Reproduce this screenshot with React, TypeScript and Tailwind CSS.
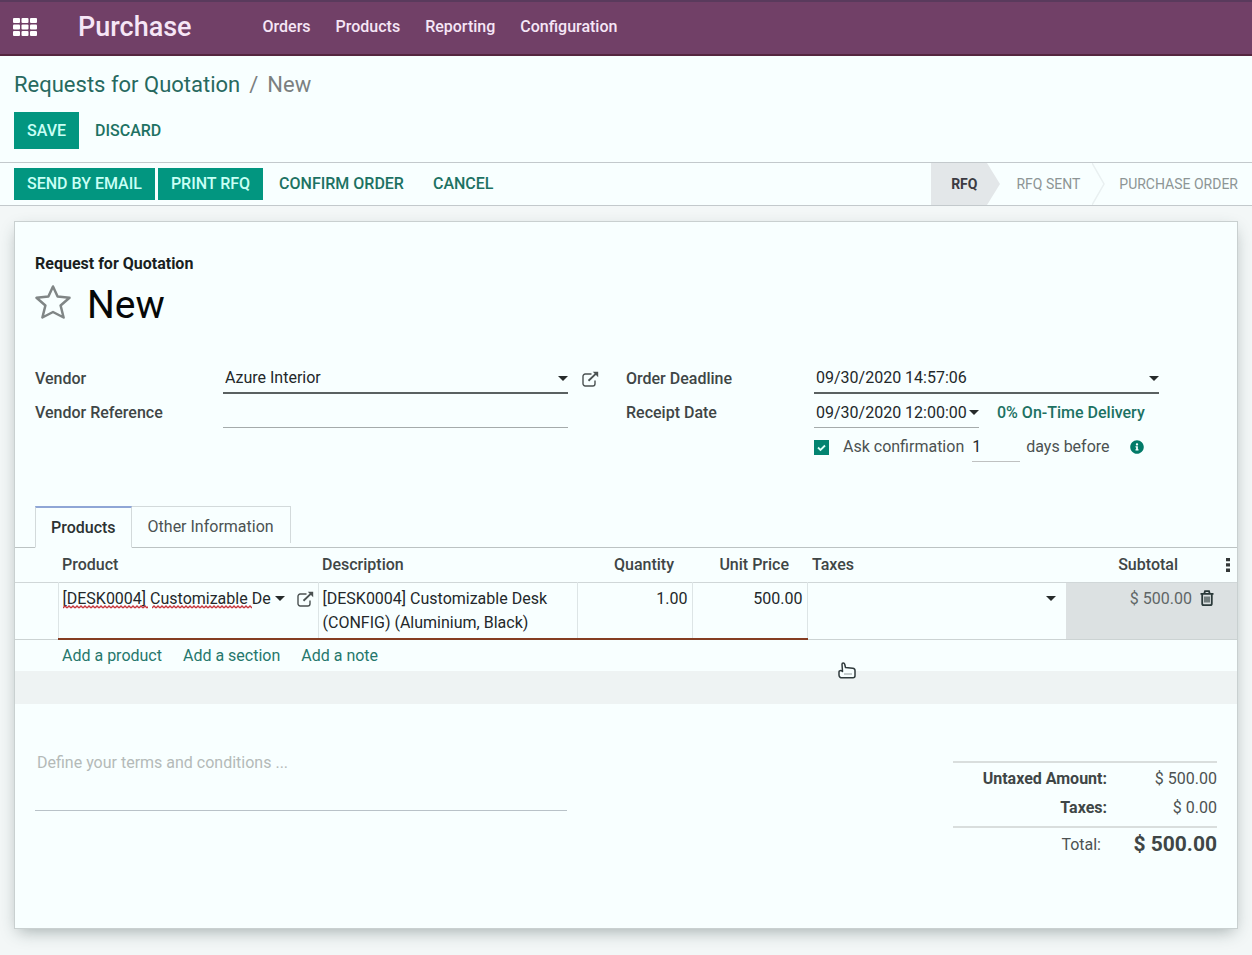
import React from "react";
import { FaInfoCircle } from "react-icons/fa";

const menus = ["Orders", "Products", "Reporting", "Configuration"];

function AppsGrid() {
  return (
    <svg viewBox="0 0 24 18" className="h-[18px] w-6" fill="currentColor">
      {[0, 8.5, 17].map((x) =>
        [0, 6.5, 13].map((y) => <rect key={x + "-" + y} x={x} y={y} width="7" height="5" rx="1" />)
      )}
    </svg>
  );
}

function Caret({ label }: { label: string }) {
  return (
    <button type="button" aria-label={label} className="flex h-4 w-2.5 shrink-0 items-center justify-center">
      <svg viewBox="0 0 10 5" className="h-[5px] w-2.5 text-[#262b2b]" fill="currentColor">
        <path d="M0 0h10L5 5z" />
      </svg>
    </button>
  );
}

function ExternalLink({ label }: { label: string }) {
  return (
    <button type="button" aria-label={label} className="flex shrink-0 text-[#4b5252]">
      <svg viewBox="0 0 17 16" className="h-4 w-[17px]" fill="none" stroke="currentColor" strokeWidth="1.4">
        <path d="M9.5 3H3.2A2.2 2.2 0 0 0 1 5.2v7.6A2.2 2.2 0 0 0 3.2 15h7.6a2.2 2.2 0 0 0 2.2-2.2V9.5" />
        <path d="M6.5 9.700 14 2.600" strokeWidth="1.9" />
        <path d="M10.800.800h5.400v5.400z" fill="currentColor" stroke="none" />
      </svg>
    </button>
  );
}

function Trash() {
  return (
    <svg viewBox="0 0 14 16" className="h-4 w-3.5" fill="none" stroke="currentColor" strokeWidth="1.8">
      <path d="M0.500 3.800h13M4.300 3.500 5 1.200h4l.7 2.300M2.200 4v9.400c0 1 .6 1.700 1.500 1.700h6.600c.9 0 1.500-.7 1.500-1.700V4" />
      <path d="M5 6.500v6M7 6.500v6M9 6.500v6" strokeWidth="1.200" />
    </svg>
  );
}

function Squiggle({ className }: { className: string }) {
  return (
    <svg aria-hidden="true" className={className} height="4">
      <defs>
        <pattern id="squiggle" width="4" height="4" patternUnits="userSpaceOnUse">
          <path d="M0 3 2 1l2 2" fill="none" stroke="#c8363c" strokeWidth="1.3" />
        </pattern>
      </defs>
      <rect width="100%" height="4" fill="url(#squiggle)" />
    </svg>
  );
}

function Chevron({ filled }: { filled?: boolean }) {
  return (
    <svg viewBox="0 0 13 42" preserveAspectRatio="none" className="h-full w-[13px] shrink-0">
      {filled ? (
        <path d="M0 0 13 21 0 42z" fill="#e3e7e9" />
      ) : (
        <path d="M0 0 12 21 0 42" fill="none" stroke="#e9f0f1" strokeWidth="1.5" />
      )}
    </svg>
  );
}

const label = "pt-[3px] text-base font-medium text-[#3f4646]";
const field = "w-full min-w-0 bg-transparent text-base text-[#23282a] outline-none";
const solid = "bg-[#029680] px-[13px] font-medium text-[#c9fff5]";
const plain = "px-[13px] font-medium text-[#1d7263]";
const editable = "border-b-2 border-l border-b-[#853d22] border-l-[#dde5e6]";

export default function App() {
  return (
    <div className="flex min-h-screen flex-col bg-[#f3f7f7] font-['Roboto',sans-serif] text-base text-[#4c5252]">
      <header className="flex h-14 items-center border-t-2 border-b-2 border-t-[#593a5c] border-b-[#55263f] bg-[#714067] pb-[3px] pl-[13px] text-[#f6e6f6]">
        <button type="button" aria-label="Apps" className="text-white">
          <AppsGrid />
        </button>
        <a href="#purchase" className="ml-[41px] text-[27px] font-medium leading-8">Purchase</a>
        <nav className="ml-[71px] flex gap-[25px] font-medium">
          {menus.map((m) => (
            <a key={m} href={"#" + m.toLowerCase()}>{m}</a>
          ))}
        </nav>
      </header>

      <div className="flex h-[106px] flex-col bg-[#f8ffff] px-3.5 pt-3.5">
        <nav aria-label="Breadcrumb" className="flex gap-[9px] text-[22px] leading-[30px] text-[#7b8080]">
          <a href="#rfq" className="text-[#27695f]">Requests for Quotation</a>
          <span>/</span>
          <span>New</span>
        </nav>
        <div className="mt-3 flex">
          <button type="button" className={"h-[37px] " + solid}>SAVE</button>
          <button type="button" className={"ml-[3px] " + plain}>DISCARD</button>
        </div>
      </div>

      <div className="flex h-11 items-stretch justify-between border-y border-[#c3c9cc] bg-[#f8ffff] px-3.5">
        <div className="flex items-center gap-[3px]">
          <button type="button" className={"h-8 " + solid}>SEND BY EMAIL</button>
          <button type="button" className={"h-8 " + solid}>PRINT RFQ</button>
          <button type="button" className={plain}>CONFIRM ORDER</button>
          <button type="button" className={plain}>CANCEL</button>
        </div>
        <ol className="flex items-stretch text-sm text-[#8d9595]">
          <li className="flex">
            <span className="flex items-center bg-[#e3e7e9] pl-5 pr-2.5 font-bold text-[#3b3b42]">RFQ</span>
            <Chevron filled />
          </li>
          <li className="flex">
            <span className="flex items-center pl-4 pr-3">RFQ SENT</span>
            <Chevron />
          </li>
          <li className="flex items-center pl-3.5">PURCHASE ORDER</li>
        </ol>
      </div>

      <main className="px-3.5 pt-[15px] pb-[26px]">
        <section className="border border-[#c9d0d0] bg-[#f8ffff] pb-[68px] shadow-[0_6px_16px_-4px_rgba(40,60,60,0.4)]">
          <div className="px-5 pt-[30px]">
            <p className="text-base font-bold leading-6 text-[#1a1f1f]">Request for Quotation</p>
            <div className="mt-2 flex h-[42px] items-start">
              <button type="button" aria-label="Priority" className="text-[#808686]">
                <svg viewBox="0 0 36 36" className="h-9 w-9" fill="none" stroke="currentColor" strokeWidth="2.5" strokeLinejoin="round">
                  <path d="M18 2.500 22.600 12.600 34.500 13.800 25.600 21.500 28.600 33.500 18 28 7.400 33.500 10.400 21.500 1.500 13.800 13.400 12.600z" />
                </svg>
              </button>
              <h1 className="ml-4 text-[39px] leading-[42px] text-[#060808]">New</h1>
            </div>

            <div className="mt-[34px] grid grid-cols-2">
              <div className="grid auto-rows-[34px] grid-cols-[188px_1fr_58px] content-start items-center">
                <label htmlFor="vendor" className={label}>Vendor</label>
                <div className="flex h-full items-center border-b-2 border-[#5a6161] pt-1">
                  <input id="vendor" defaultValue="Azure Interior" className={field + " pl-0.5"} />
                  <Caret label="Open vendors" />
                </div>
                <div className="pl-3.5 pt-1"><ExternalLink label="Open vendor" /></div>
                <label htmlFor="ref" className={label}>Vendor Reference</label>
                <div className="flex h-full items-center border-b border-[#a5abab] pt-1">
                  <input id="ref" className={field} />
                </div>
              </div>

              <div className="grid auto-rows-[34px] grid-cols-[188px_1fr_58px] items-center">
                <label htmlFor="deadline" className={label}>Order Deadline</label>
                <div className="flex h-full items-center border-b-2 border-[#5a6161] pt-1">
                  <input id="deadline" defaultValue="09/30/2020 14:57:06" className={field + " pl-0.5"} />
                  <Caret label="Pick deadline" />
                </div>
                <span />
                <label htmlFor="receipt" className={label}>Receipt Date</label>
                <div className="flex h-full items-center">
                  <div className="flex h-full w-[165px] items-center border-b border-[#a5abab] pt-1">
                    <input id="receipt" defaultValue="09/30/2020 12:00:00" className={field + " pl-0.5"} />
                    <Caret label="Pick receipt date" />
                  </div>
                  <a href="#delivery" className="ml-[18px] whitespace-nowrap pt-1 font-medium text-[#1d7263]">0% On-Time Delivery</a>
                </div>
                <span />
                <div className="col-span-2 col-start-2 flex h-full items-center whitespace-nowrap">
                  <span className="relative mt-1 flex h-[15px] w-[15px]">
                    <input id="ask" type="checkbox" defaultChecked className="h-[15px] w-[15px] appearance-none bg-[#038471]" />
                    <svg aria-hidden="true" viewBox="0 0 15 15" className="pointer-events-none absolute inset-0" fill="none" stroke="#d9fff8" strokeWidth="1.8">
                      <path d="m4 7.500 2.500 2.500L11 5.500" />
                    </svg>
                  </span>
                  <label htmlFor="ask" className="ml-3.5 pt-1">Ask confirmation</label>
                  <div className="ml-2 flex h-full w-12 items-center border-b border-[#bfc1c1] pt-1">
                    <input aria-label="Days" defaultValue="1" className={field} />
                  </div>
                  <span className="ml-1.5 pt-1">days before</span>
                  <FaInfoCircle className="ml-5 mt-1 h-3.5 w-3.5 text-[#027a68]" />
                </div>
              </div>
            </div>
          </div>

          <div role="tablist" className="mt-11 flex h-[42px] border-b border-[#bcc3c3] pl-5">
            <button type="button" role="tab" aria-selected="true" className="-mb-px border border-t-2 border-[#d3dadb] border-t-[#8fa6d6] border-b-[#f8ffff] bg-[#f8ffff] px-[15px] font-medium text-[#2c3232]">Products</button>
            <button type="button" role="tab" aria-selected="false" className="mb-1 border border-b-0 border-l-0 border-[#d3dadb] px-4 pt-1">Other Information</button>
          </div>

          <table className="w-full table-fixed border-collapse text-[#23282a]">
            <colgroup>
              <col className="w-[43px]" />
              <col className="w-[260px]" />
              <col />
              <col className="w-[115px]" />
              <col className="w-[115px]" />
              <col className="w-[259px]" />
              <col className="w-[130px]" />
              <col className="w-[41px]" />
            </colgroup>
            <thead>
              <tr className="h-[34px] border-b border-[#d0d7d8] text-left text-[#3f4646] [&>th]:p-0 [&>th]:font-medium">
                <th />
                <th><span className="pl-1">Product</span></th>
                <th><span className="pl-1">Description</span></th>
                <th><span className="block pr-[18px] text-right">Quantity</span></th>
                <th><span className="block pr-[18px] text-right">Unit Price</span></th>
                <th><span className="pl-[5px]">Taxes</span></th>
                <th><span className="block pr-[18px] text-right">Subtotal</span></th>
                <th>
                  <button type="button" aria-label="Optional columns" className="ml-auto mr-[7px] flex">
                    <svg viewBox="0 0 4 14" className="h-3.5 w-1" fill="#333838">
                      <path d="M0 0h4v3.300H0zM0 5.300h4v3.300H0zM0 10.600h4v3.300H0z" />
                    </svg>
                  </button>
                </th>
              </tr>
            </thead>
            <tbody>
              <tr className="h-[57px] border-b border-[#ccd3d3] align-top [&>td]:p-0">
                <td />
                <td className={editable}>
                  <div className="flex items-center pl-1 pt-1">
                    <div className="relative flex min-w-0 flex-1">
                      <input aria-label="Product" spellCheck={false} defaultValue="[DESK0004] Customizable De" className={field} />
                      <Squiggle className="absolute bottom-0.5 left-0 w-[85px]" />
                      <Squiggle className="absolute bottom-0.5 left-[89px] w-[100px]" />
                    </div>
                    <Caret label="Open products" />
                    <div className="ml-3 mr-1"><ExternalLink label="Open product" /></div>
                  </div>
                </td>
                <td className={editable}>
                  <textarea aria-label="Description" rows={2} defaultValue={"[DESK0004] Customizable Desk\n(CONFIG) (Aluminium, Black)"} className={field + " block resize-none overflow-hidden pl-1 pt-1 leading-6"} />
                </td>
                <td className={editable}>
                  <input aria-label="Quantity" defaultValue="1.00" className={field + " pr-1 pt-1 text-right"} />
                </td>
                <td className={editable + " border-r border-r-[#dde5e6]"}>
                  <input aria-label="Unit price" defaultValue="500.00" className={field + " pr-1 pt-1 text-right"} />
                </td>
                <td>
                  <div className="flex items-center pr-2.5 pt-1">
                    <input aria-label="Taxes" className={field} />
                    <Caret label="Open taxes" />
                  </div>
                </td>
                <td className="bg-[#dce1e2]">
                  <span className="block pr-1 pt-1 text-right text-[#5f6666]">$ 500.00</span>
                </td>
                <td className="bg-[#dce1e2]">
                  <button type="button" aria-label="Delete row" className="ml-1 mt-[7px] block text-[#2b3a3a]"><Trash /></button>
                </td>
              </tr>
              <tr className="h-8 [&>td]:p-0">
                <td />
                <td colSpan={7}>
                  <div className="relative flex gap-[21px] pl-1 text-[#25776c]">
                    <a href="#product">Add a product</a>
                    <a href="#section">Add a section</a>
                    <a href="#note">Add a note</a>
                    <svg aria-hidden="true" viewBox="0 0 18 17" className="absolute left-[780px] top-[18px] h-[17px] w-[18px]" fill="#f8ffff" stroke="#2f3a3c" strokeWidth="1.5" strokeLinejoin="round">
                      <path d="M4.500 9.500 4 2.300C4 .8 6.300.600 6.700 2.200L7.500 5.500l7.300.8c1.400.2 2.200 1 2.200 2.300v5.200c0 1.200-.8 2-2 2H4.200c-2 0-3.200-1-3.200-2.800V9.800c0-1.300 1.800-1.700 3.500-.3z" />
                      <path d="M6.500 12h8" strokeDasharray="1 1" strokeWidth="1" />
                    </svg>
                  </div>
                </td>
              </tr>
              <tr className="h-[33px] bg-[#eef3f3]">
                <td colSpan={8} />
              </tr>
            </tbody>
          </table>

          <div className="flex items-start justify-between px-5 pt-[45px]">
            <textarea aria-label="Terms and conditions" placeholder="Define your terms and conditions ..." rows={2} className="h-[62px] w-[45%] resize-none border-b border-[#b9c2c8] pl-0.5 pt-0.5 text-base leading-6 outline-none placeholder:text-[#b4bab8]" />
            <table className="mt-3 w-[264px] border-collapse border-t-2 border-[#d9dedd] text-right [&_td]:p-0 [&_th]:p-0">
              <tbody>
                <tr className="h-8">
                  <th scope="row" className="font-bold text-[#3f4646]">Untaxed Amount:</th>
                  <td>$ 500.00</td>
                </tr>
                <tr className="h-[33px] align-top">
                  <th scope="row" className="pt-0.5 font-bold text-[#3f4646]"><span className="block pt-0.5">Taxes:</span></th>
                  <td><span className="block pt-0.5">$ 0.00</span></td>
                </tr>
                <tr className="h-[33px] border-t-2 border-[#d9dedd]">
                  <th scope="row" className="font-normal"><span className="block pr-1.5 pt-0.5">Total:</span></th>
                  <td className="w-[110px] text-[21px] font-bold leading-7 text-[#3f4646]">$ 500.00</td>
                </tr>
              </tbody>
            </table>
          </div>
        </section>
      </main>
    </div>
  );
}
